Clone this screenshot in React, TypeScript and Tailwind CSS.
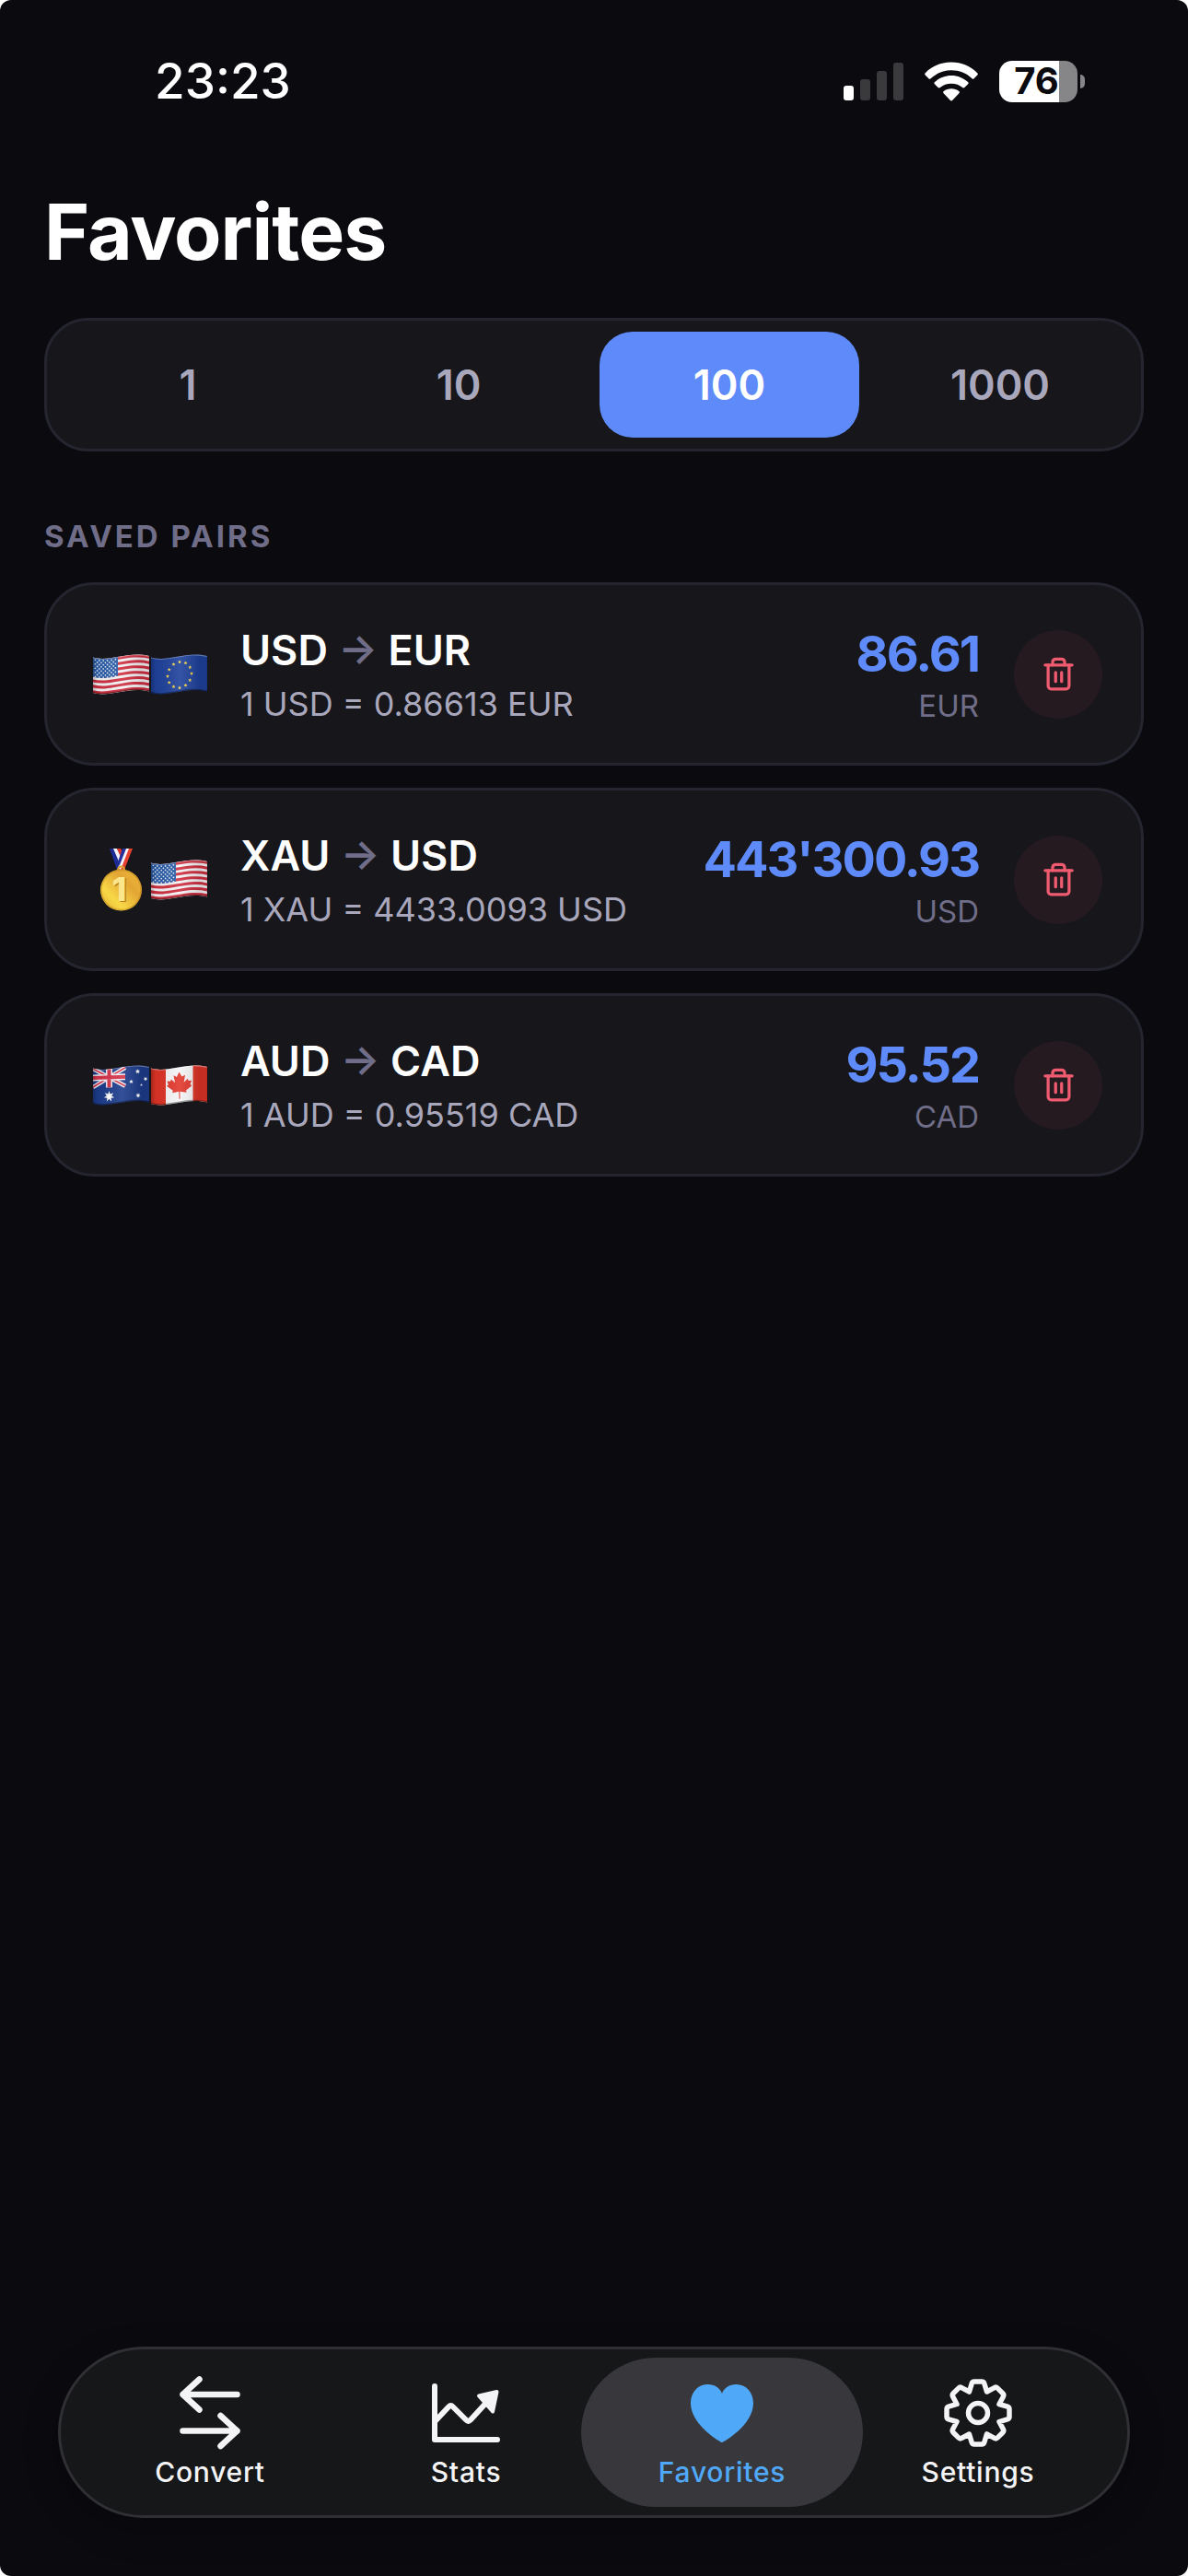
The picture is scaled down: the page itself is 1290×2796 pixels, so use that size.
import { useId, useState, type ReactNode } from "react";
import { Trash2 } from "lucide-react";

const AMOUNTS = ["1", "10", "100", "1000"];

const PAIRS = [
  { from: "USD", to: "EUR", rate: "0.86613", value: "86.61" },
  { from: "XAU", to: "USD", rate: "4433.0093", value: "443'300.93" },
  { from: "AUD", to: "CAD", rate: "0.95519", value: "95.52" },
];

// vertical offset of the waving cloth at x (0..61)
const wave = (x: number) => {
  const t = x / 61;
  const u = 1 - t;
  return 3.5 * u ** 3 + 27 * u * u * t - 12 * u * t * t + 2 * t ** 3;
};

const starPoints = (cx: number, cy: number, r: number, spikes: number, inner = 0.45) =>
  Array.from({ length: spikes * 2 }, (_, i) => {
    const a = (Math.PI * i) / spikes - Math.PI / 2;
    const d = i % 2 ? r * inner : r;
    return `${(cx + d * Math.cos(a)).toFixed(2)},${(cy + d * Math.sin(a)).toFixed(2)}`;
  }).join(" ");

function WavingFlag({ label, children }: { label: string; children: ReactNode }) {
  const id = useId();
  return (
    <svg width="62" height="44" viewBox="0 0 62 44" role="img" aria-label={label}>
      <defs>
        <clipPath id={`${id}c`}>
          <path d="M0 3.5C18 9 38 -4 61 2V40.5C38 34.500 18 47.500 0 42Z" />
        </clipPath>
        <linearGradient id={`${id}g`} x1="0" x2="1" y1="0" y2="0">
          <stop offset="0" stopColor="#000" stopOpacity="0.25" />
          <stop offset="0.08" stopColor="#000" stopOpacity="0.05" />
          <stop offset="0.5" stopColor="#fff" stopOpacity="0.1" />
          <stop offset="0.85" stopColor="#000" stopOpacity="0.12" />
          <stop offset="0.97" stopColor="#000" stopOpacity="0.1" />
          <stop offset="1" stopColor="#000" stopOpacity="0.35" />
        </linearGradient>
      </defs>
      <g clipPath={`url(#${id}c)`}>
        {children}
        <rect width="62" height="44" fill={`url(#${id}g)`} />
        <path d="M0 3.5C18 9 38 -4 61 2" fill="none" stroke="#fff" strokeOpacity="0.3" strokeWidth="2" />
        <path d="M0 42C18 47.500 38 34.500 61 40.500" fill="none" stroke="#000" strokeOpacity="0.35" strokeWidth="2.500" />
      </g>
    </svg>
  );
}

function UsFlag() {
  return (
    <WavingFlag label="United States">
      <rect width="62" height="44" fill="#f4f2f5" />
      {[0, 2, 4, 6, 8, 10, 12].map((i) => (
        <path
          key={i}
          d="M-1 3.500C18 9 38 -4 62 2"
          transform={`translate(0 ${1.5 + i * 2.96})`}
          fill="none"
          stroke="#cf2f3f"
          strokeWidth="3"
        />
      ))}
      <path d="M0 3C10 6.500 18 4 27 1.500V23.500C18 25.500 10 27.500 0 24.500Z" fill="#2b5da8" />
      {Array.from({ length: 9 }, (_, row) =>
        Array.from({ length: row % 2 ? 5 : 6 }, (_, col) => {
          const x = 2.4 + col * 4.4 + (row % 2 ? 2.2 : 0);
          return <circle key={`${row}-${col}`} cx={x} cy={wave(x) + 2.2 + row * 2.25} r="0.85" fill="#e9f0fb" />;
        })
      )}
    </WavingFlag>
  );
}

function EuFlag() {
  return (
    <WavingFlag label="European Union">
      <rect width="62" height="44" fill="#1f419b" />
      {Array.from({ length: 12 }, (_, i) => {
        const a = (Math.PI * i) / 6;
        return (
          <polygon
            key={i}
            points={starPoints(31 + 13 * Math.sin(a), 22.5 - 14 * Math.cos(a) - Math.sin(a) * 1.5, 2.1, 5)}
            fill="#f7d84a"
          />
        );
      })}
    </WavingFlag>
  );
}

function AuFlag() {
  return (
    <WavingFlag label="Australia">
      <rect width="62" height="44" fill="#1d3c8c" />
      <g transform="translate(0 3) skewY(-2)">
        <path d="M0 1L35 21M0 21L35 1" stroke="#f1f1f5" strokeWidth="4.500" />
        <path d="M0 1L35 21M0 21L35 1" stroke="#d6344a" strokeWidth="1.600" />
        <path d="M17.500 0V22M0 11H35" stroke="#f1f1f5" strokeWidth="7" />
        <path d="M17.500 0V22M0 11H35" stroke="#d6344a" strokeWidth="4" />
      </g>
      <polygon points={starPoints(17.5, 34, 6, 7)} fill="#fff" />
      <polygon points={starPoints(48.5, 7, 2.8, 7)} fill="#fff" />
      <polygon points={starPoints(41.500, 18, 2.4, 7)} fill="#fff" />
      <polygon points={starPoints(57, 15, 2.4, 7)} fill="#fff" />
      <polygon points={starPoints(52.5, 21.5, 1.5, 5)} fill="#fff" />
      <polygon points={starPoints(49, 33, 2.8, 7)} fill="#fff" />
    </WavingFlag>
  );
}

function CaFlag() {
  return (
    <WavingFlag label="Canada">
      <rect width="62" height="44" fill="#f5f4f6" />
      <path d="M0 0H16V44H0ZM45.500 0H62V44H45.500Z" fill="#dd3326" />
      <path
        d="M30.500 7.500l3 5 3.600-1.700-1.500 8 4.200-4 .8 2.300 3.500-.4-1.600 4.300 1.900 1.200-6.400 5.200.6 2.400-7.200-1 .2 8h-1.100l-.3-8-7 1.400.6-2.400-6.900-5 2-1.200-1.500-4.200 3.600.3.900-2.300 4.200 3.800-1.700-7.900 3.500 1.600z"
        fill="#e2382d"
      />
    </WavingFlag>
  );
}

function GoldMedal() {
  const id = useId();
  return (
    <svg width="62" height="70" viewBox="0 0 62 70" role="img" aria-label="Gold">
      <defs>
        <linearGradient id={id} x1="0" y1="1" x2="1" y2="0">
          <stop offset="0" stopColor="#e0a92e" />
          <stop offset="0.3" stopColor="#f8d847" />
          <stop offset="0.65" stopColor="#e3a534" />
          <stop offset="1" stopColor="#f0bd3c" />
        </linearGradient>
      </defs>
      <path d="M18 1h6l9 15-3 8h-4z" fill="#1d2c94" />
      <path d="M22 1h4l8 16-3 5z" fill="#f4f4fa" />
      <path d="M26 1h4l5 10-2 6z" fill="#e0362f" />
      <path d="M43 1h-6l-9 23h6z" fill="#e8402f" />
      <path d="M39 1h-4l-8 21 3 2z" fill="#f4f4fa" />
      <path d="M36 1h-4l-4.500 13 1 6z" fill="#26309c" />
      <circle cx="30.500" cy="24" r="3.500" fill="none" stroke="#d9a22e" strokeWidth="2" />
      <circle cx="30.500" cy="46" r="22.500" fill={`url(#${id})`} />
      <circle cx="30.500" cy="46" r="21.500" fill="none" stroke="#b97e18" strokeOpacity="0.45" strokeWidth="1.500" />
      <text x="30" y="59" textAnchor="middle" fill="#b9821c" className="font-['Inter'] text-[36px] font-extrabold">
        1
      </text>
      <text x="28.500" y="58" textAnchor="middle" fill="#fbe68c" className="font-['Inter'] text-[36px] font-extrabold">
        1
      </text>
    </svg>
  );
}

const FLAGS: Record<string, () => ReactNode> = {
  USD: UsFlag,
  EUR: EuFlag,
  AUD: AuFlag,
  CAD: CaFlag,
  XAU: GoldMedal,
};

function StatusBar() {
  return (
    <header className="flex h-44 items-center justify-between pr-28 pl-42">
      <time className="text-[53px] leading-none font-medium">23:23</time>
      <div className="flex items-center gap-[23px]">
        <svg width="65" height="42" viewBox="0 0 65 42" aria-label="Signal">
          <rect y="26" width="11" height="16" rx="3" fill="#fff" />
          <rect x="18" y="19" width="11" height="23" rx="3" fill="#3a3a3d" />
          <rect x="36" y="10" width="11" height="32" rx="3" fill="#3a3a3d" />
          <rect x="54" y="1" width="11" height="41" rx="3" fill="#3a3a3d" />
        </svg>
        <svg width="58" height="43" viewBox="0 0 58 43" fill="#fff" aria-label="Wi-Fi">
          <path d="M29 0.500C40 0.500 50 4.800 57.200 12.200C58 13 58 13.800 57.300 14.500L53.600 18.200C52.900 18.900 52.200 18.900 51.500 18.200C45.500 12.500 37.500 9.300 29 9.300S12.500 12.500 6.500 18.200C5.800 18.900 5.100 18.900 4.400 18.200L.7 14.500C0 13.800 0 13 .8 12.200C8 4.800 18 .5 29 .5Z" />
          <path d="M29 15C36 15 42.300 17.700 47 22.100C47.800 22.900 47.800 23.600 47.100 24.300L43.300 28.100C42.600 28.800 41.900 28.700 41.200 28.100C37.900 25.200 33.700 23.700 29 23.700S20.100 25.200 16.800 28.100C16.100 28.700 15.400 28.800 14.700 28.100L10.900 24.300C10.200 23.600 10.200 22.900 11 22.100C15.700 17.700 22 15 29 15Z" />
          <path d="M29 29.200C32.300 29.200 35 30.200 37.300 32C38.100 32.700 38.100 33.400 37.400 34.200L30.300 41.700C29.500 42.600 28.500 42.600 27.700 41.700L20.600 34.200C19.900 33.400 19.900 32.700 20.700 32C23 30.200 25.700 29.200 29 29.200Z" />
        </svg>
        <div className="flex items-center gap-[3px]">
          <div className="flex h-[45px] w-[85px] items-center justify-center rounded-[14px] bg-[linear-gradient(to_right,#fff_65px,#868688_65px)] pr-1">
            <span className="text-[40px] leading-none font-bold text-[#0a0a0f]">76</span>
          </div>
          <div className="h-[15px] w-[5px] rounded-r-full bg-[#868688]" />
        </div>
      </div>
    </header>
  );
}

function PairCard({ from, to, rate, value, onDelete }: (typeof PAIRS)[number] & { onDelete: () => void }) {
  const FromFlag = FLAGS[from];
  const ToFlag = FLAGS[to];
  return (
    <li className="flex h-[199px] items-center justify-between rounded-[54px] border-3 border-[#25252f] bg-[#16161b] pr-[42px] pl-[50px]">
      <div className="flex items-center gap-[35px]">
        <div className="flex items-center gap-px">
          <FromFlag />
          <ToFlag />
        </div>
        <div className="flex flex-col gap-2">
          <h3 className="text-[45px] leading-14 font-semibold">
            {from} <span className="text-[#6f6d87]">→</span> {to}
          </h3>
          <p className="text-4xl leading-11 text-[#a9a7bb]">
            1 {from} = {rate} {to}
          </p>
        </div>
      </div>
      <div className="flex items-center gap-[38px]">
        <div className="flex flex-col gap-1 text-right">
          <span className="text-[54px] leading-16 font-bold tracking-[-2px] text-[#5e8bf9]">{value}</span>
          <span className="text-[33px] leading-10 text-[#6f6d87]">{to}</span>
        </div>
        <button
          onClick={onDelete}
          aria-label={`Delete ${from} to ${to}`}
          className="flex size-24 items-center justify-center rounded-full bg-[#261a21] text-[#f05b70]"
        >
          <Trash2 size={39} />
        </button>
      </div>
    </li>
  );
}

function ConvertIcon() {
  return (
    <svg width="66" height="80" viewBox="0 0 66 80" fill="none" stroke="currentColor" strokeWidth="6.500" strokeLinecap="round" strokeLinejoin="round">
      <path d="M62.500 20H3.500M21.500 3.500L3.500 20L21.500 36.500" />
      <path d="M3.500 59.500H62.500M44.500 43L62.500 59.500L44.500 76" />
    </svg>
  );
}

function StatsIcon() {
  return (
    <svg width="74" height="80" viewBox="0 0 74 80" fill="none" stroke="currentColor" strokeWidth="6" strokeLinecap="round" strokeLinejoin="round">
      <path d="M3 11V69H71" />
      <path d="M3.500 49L18 33.500Q20.500 31 23 33.500L37 47.500Q39.500 50 42 47.500L58 30" />
      <path d="M51 21.500L70.500 17L66 38.500Z" fill="currentColor" strokeWidth="4" />
    </svg>
  );
}

function HeartIcon() {
  return (
    <svg width="70" height="80" viewBox="0 0 70 80" fill="currentColor">
      <path d="M35 72C33 71.500 1 53 1 29.500C1 17.500 9 9 19.500 9C27 9 33 13 35 19C37 13 43 9 50.500 9C61 9 69 17.500 69 29.500C69 53 37 71.500 35 72Z" />
    </svg>
  );
}

// eight teeth, each narrowing from a shared valley point to a flat top
const GEAR_PATH =
  Array.from({ length: 8 }, (_, i) => {
    const at = (radial: number, side: number) => {
      const a = (Math.PI * i) / 4;
      const x = 40 + radial * Math.sin(a) + side * Math.cos(a);
      const y = 40 - radial * Math.cos(a) + side * Math.sin(a);
      return `${x.toFixed(2)} ${y.toFixed(2)}`;
    };
    return `${i ? "L" : "M"}${at(23, -9.5)}L${at(32, -6.8)}Q${at(34, -6.2)} ${at(34, -4)}L${at(34, 4)}Q${at(34, 6.2)} ${at(32, 6.8)}`;
  }).join("") + "Z";

function GearIcon() {
  return (
    <svg width="80" height="80" viewBox="0 0 80 80" fill="none" stroke="currentColor" strokeWidth="5.500" strokeLinejoin="round">
      <path d={GEAR_PATH} />
      <circle cx="40" cy="40" r="10.500" />
    </svg>
  );
}

const TABS = [
  { name: "Convert", Icon: ConvertIcon },
  { name: "Stats", Icon: StatsIcon },
  { name: "Favorites", Icon: HeartIcon },
  { name: "Settings", Icon: GearIcon },
];

function TabBar() {
  const [tab, setTab] = useState("Favorites");
  return (
    <nav className="mx-[63px] mt-auto mb-[63px] grid grid-cols-4 rounded-full border-3 border-[#303034] bg-[#161718] px-[23px] py-[9px] shadow-[0_12px_40px_rgba(0,0,0,0.2)]">
      {TABS.map(({ name, Icon }) => (
        <button
          key={name}
          onClick={() => setTab(name)}
          className={`-mx-3.5 flex h-[162px] flex-col items-center justify-center gap-1.5 rounded-full text-3xl leading-9 font-medium tracking-wide ${
            tab === name ? "bg-[#38373c] text-[#50a9f8]" : "text-[#f4f4f7]"
          }`}
        >
          <Icon />
          {name}
        </button>
      ))}
    </nav>
  );
}

export default function App() {
  const [amount, setAmount] = useState("100");
  const [pairs, setPairs] = useState(PAIRS);

  return (
    <div className="bg-white">
      <div className="flex min-h-screen flex-col rounded-xl bg-[#0a0a0f] font-['Inter',sans-serif] text-white">
        <StatusBar />
        <main className="flex flex-col px-12 pt-[26px]">
          <h1 className="text-[84px] leading-[100px] font-bold tracking-[-1px]">Favorites</h1>

          <div className="mt-[43px] grid h-[145px] grid-cols-4 gap-3 rounded-[48px] border-3 border-[#25252f] bg-[#16161b] p-3">
            {AMOUNTS.map((a) => (
              <button
                key={a}
                onClick={() => setAmount(a)}
                className={`rounded-[36px] text-[45px] font-semibold ${
                  a === amount ? "bg-[#5e8bf9] text-white" : "text-[#a9a7bb]"
                }`}
              >
                {a}
              </button>
            ))}
          </div>

          <h2 className="mt-[72px] text-[33px] leading-10 font-bold tracking-[3px] text-[#6f6d87] uppercase">
            Saved pairs
          </h2>
          <ul className="mt-[30px] flex flex-col gap-6">
            {pairs.map((p) => (
              <PairCard key={p.from + p.to} {...p} onDelete={() => setPairs(pairs.filter((q) => q !== p))} />
            ))}
          </ul>
        </main>
        <TabBar />
      </div>
    </div>
  );
}
